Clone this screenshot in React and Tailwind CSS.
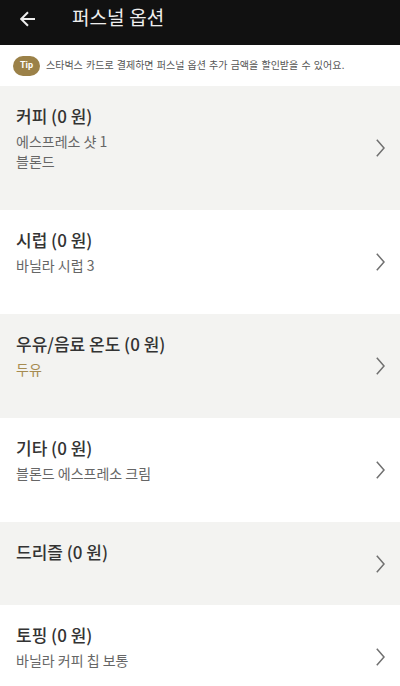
const options = [
  { name: "커피 (0 원)", details: ["에스프레소 샷 1", "블론드"] },
  { name: "시럽 (0 원)", details: ["바닐라 시럽 3"] },
  { name: "우유/음료 온도 (0 원)", details: ["두유"], highlight: true },
  { name: "기타 (0 원)", details: ["블론드 에스프레소 크림"] },
  { name: "드리즐 (0 원)", details: [] },
  { name: "토핑 (0 원)", details: ["바닐라 커피 칩 보통"] },
];

function Header() {
  return (
    <header className="flex h-[45px] items-center bg-[#111111] pb-2 pl-5 text-[#eeeeee]">
      <button type="button" aria-label="뒤로" className="mr-9">
        <svg viewBox="0 0 16 16" className="size-4" fill="none" stroke="currentColor" strokeWidth="2">
          <path d="M15 8H1.5M8 1.2L1.2 8L8 14.8" />
        </svg>
      </button>
      <h1 className="font-[Roboto,'Noto_Sans_CJK_KR',sans-serif] text-[19px] leading-6">퍼스널 옵션</h1>
    </header>
  );
}

function OptionRow({ name, details, highlight }) {
  return (
    <li className="odd:bg-[#f3f3f1] even:bg-white">
      <button type="button" className="flex min-h-[83px] w-full items-center justify-between pr-[15px] pl-4 text-left">
        <span className="flex flex-col self-start pt-[18px] pb-[39px]">
          <span className="text-[17px] leading-6 font-medium text-[#333333]">{name}</span>
          {details.length > 0 && (
            <span className={highlight ? "mt-[3px] text-sm leading-5 text-[#a68b50]" : "mt-[3px] text-sm leading-5 text-[#666666]"}>
              {details.map((detail) => (
                <span key={detail} className="block">
                  {detail}
                </span>
              ))}
            </span>
          )}
        </span>
        <svg viewBox="0 0 9 18" className="h-[18px] w-[9px] shrink-0" fill="none" stroke="#707070" strokeWidth="1.5">
          <path d="M0.8 0.8L8 9L0.8 17.2" />
        </svg>
      </button>
    </li>
  );
}

export default function App() {
  return (
    <div className="min-h-screen bg-white font-['Noto_Sans_CJK_KR',sans-serif]">
      <Header />
      <p className="flex h-[41px] items-center gap-[6px] pl-[13px] font-['DejaVu_Sans','Noto_Sans_CJK_KR',sans-serif] text-[10px] text-[#555555]">
        <span className="flex h-5 w-[27px] items-center justify-center rounded-full bg-[#9b8148] font-[Roboto,sans-serif] text-[9px] font-bold text-white">
          Tip
        </span>
        스타벅스 카드로 결제하면 퍼스널 옵션 추가 금액을 할인받을 수 있어요.
      </p>
      <ul>
        {options.map((option) => (
          <OptionRow key={option.name} {...option} />
        ))}
      </ul>
    </div>
  );
}
